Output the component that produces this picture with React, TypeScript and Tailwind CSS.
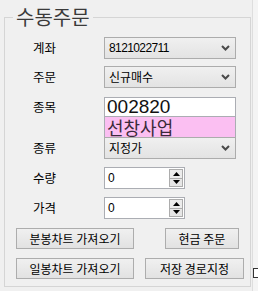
import React from "react";

const KR = "font-['Noto_Sans_CJK_KR','Noto_Sans',sans-serif]";

function Chevron() {
  return (
    <svg width="9" height="6" viewBox="0 0 9 6" className="shrink-0">
      <polyline points="1,1 4.5,4.5 8,1" fill="none" stroke="#4a4a4a" strokeWidth="2" />
    </svg>
  );
}

function Combo({ value, digits }: { value: string; digits?: boolean }) {
  return (
    <div className="flex h-[22px] w-[132px] items-center justify-between border border-[#acacac] bg-gradient-to-b from-[#f0f0f0] to-[#e3e3e3] pl-[4px] pr-[5px]">
      <span
        className={
          digits
            ? "font-['Liberation_Sans',sans-serif] text-[12px] tracking-[-0.6px] text-black"
            : `${KR} text-[12px] text-black`
        }
      >
        {value}
      </span>
      <Chevron />
    </div>
  );
}

function Spin({ value }: { value: string }) {
  return (
    <div className="flex h-[22px] w-[81px] border border-[#abadb3] bg-white">
      <div className="flex flex-1 items-center pl-[3px] font-['Liberation_Sans',sans-serif] text-[12px] text-black">
        {value}
      </div>
      <div className="my-[1px] mr-[1px] flex w-[14px] flex-col border border-[#acacac]">
        <div className="flex flex-1 items-center justify-center border-b border-[#acacac] bg-[#ececec]">
          <svg width="7" height="4" viewBox="0 0 7 4">
            <polygon points="0,4 3.5,0 7,4" fill="#000" />
          </svg>
        </div>
        <div className="flex flex-1 items-center justify-center bg-[#e6e6e6]">
          <svg width="7" height="4" viewBox="0 0 7 4">
            <polygon points="0,0 3.5,4 7,0" fill="#000" />
          </svg>
        </div>
      </div>
    </div>
  );
}

function Row({ label, children, className }: { label: string; children: React.ReactNode; className?: string }) {
  return (
    <div className={`flex items-center ${className ?? ""}`}>
      <div className={`w-[71px] ${KR} text-[12.5px] text-black`}>{label}</div>
      {children}
    </div>
  );
}

function Btn({ label, className }: { label: string; className: string }) {
  return (
    <button
      className={`flex h-[21px] items-center justify-center border border-[#adadad] bg-gradient-to-b from-[#f0f0f0] to-[#e2e2e2] ${KR} text-[12px] leading-[16px] text-black ${className}`}
    >
      {label}
    </button>
  );
}

export default function App() {
  return (
    <div className="flex h-[291px] w-[258px] overflow-hidden bg-[#f0f0f0]">
      <fieldset className="mt-[5px] ml-[4px] h-[282px] w-[249px] border border-[#d5d5d5]">
        <legend className={`ml-[8px] px-[3px] ${KR} text-[20px] leading-[24px] text-[#3a3a3a]`}>
          수동주문
        </legend>

        <div className="flex flex-col pl-[28px]">
          <Row label="계좌" className="mt-[8px]">
            <Combo value="8121022711" digits />
          </Row>
          <Row label="주문" className="mt-[7px]">
            <Combo value="신규매수" />
          </Row>

          <div className="mt-[9px] flex">
            <div className={`flex h-[20px] w-[71px] items-center ${KR} text-[12.5px] text-black`}>종목</div>
            <div className="flex w-[132px] flex-col">
              <div className="flex h-[20px] items-center border border-[#abadb3] bg-white pl-[2px] font-['Liberation_Sans',sans-serif] text-[19px] leading-[18px] text-[#111]">
                002820
              </div>
              <div className={`flex h-[20px] items-center border-x border-[#abadb3] bg-[#fbbff2] pl-[2px] ${KR} text-[18px] leading-[20px] text-[#3a2a3a]`}>
                선창사업
              </div>
            </div>
          </div>
          <Row label="종류">
            <Combo value="지정가" />
          </Row>

          <Row label="수량" className="mt-[8px]">
            <Spin value="0" />
          </Row>
          <Row label="가격" className="mt-[8px]">
            <Spin value="0" />
          </Row>
        </div>

        <div className="mt-[9px] flex pl-[11px]">
          <Btn label="분봉차트 가져오기" className="w-[118px]" />
          <Btn label="현금 주문" className="ml-[31px] w-[74px]" />
        </div>
        <div className="mt-[9px] flex pl-[11px]">
          <Btn label="일봉차트 가져오기" className="w-[118px]" />
          <Btn label="저장 경로지정" className="ml-[11px] w-[99px]" />
        </div>
      </fieldset>

      <div className="ml-[1px] flex h-full flex-col border-l border-[#dedede] bg-[#f4f4f4]">
        <div className="mt-[268px] h-[10px] w-[5px] border-y border-l border-[#333] bg-white" />
      </div>
    </div>
  );
}
